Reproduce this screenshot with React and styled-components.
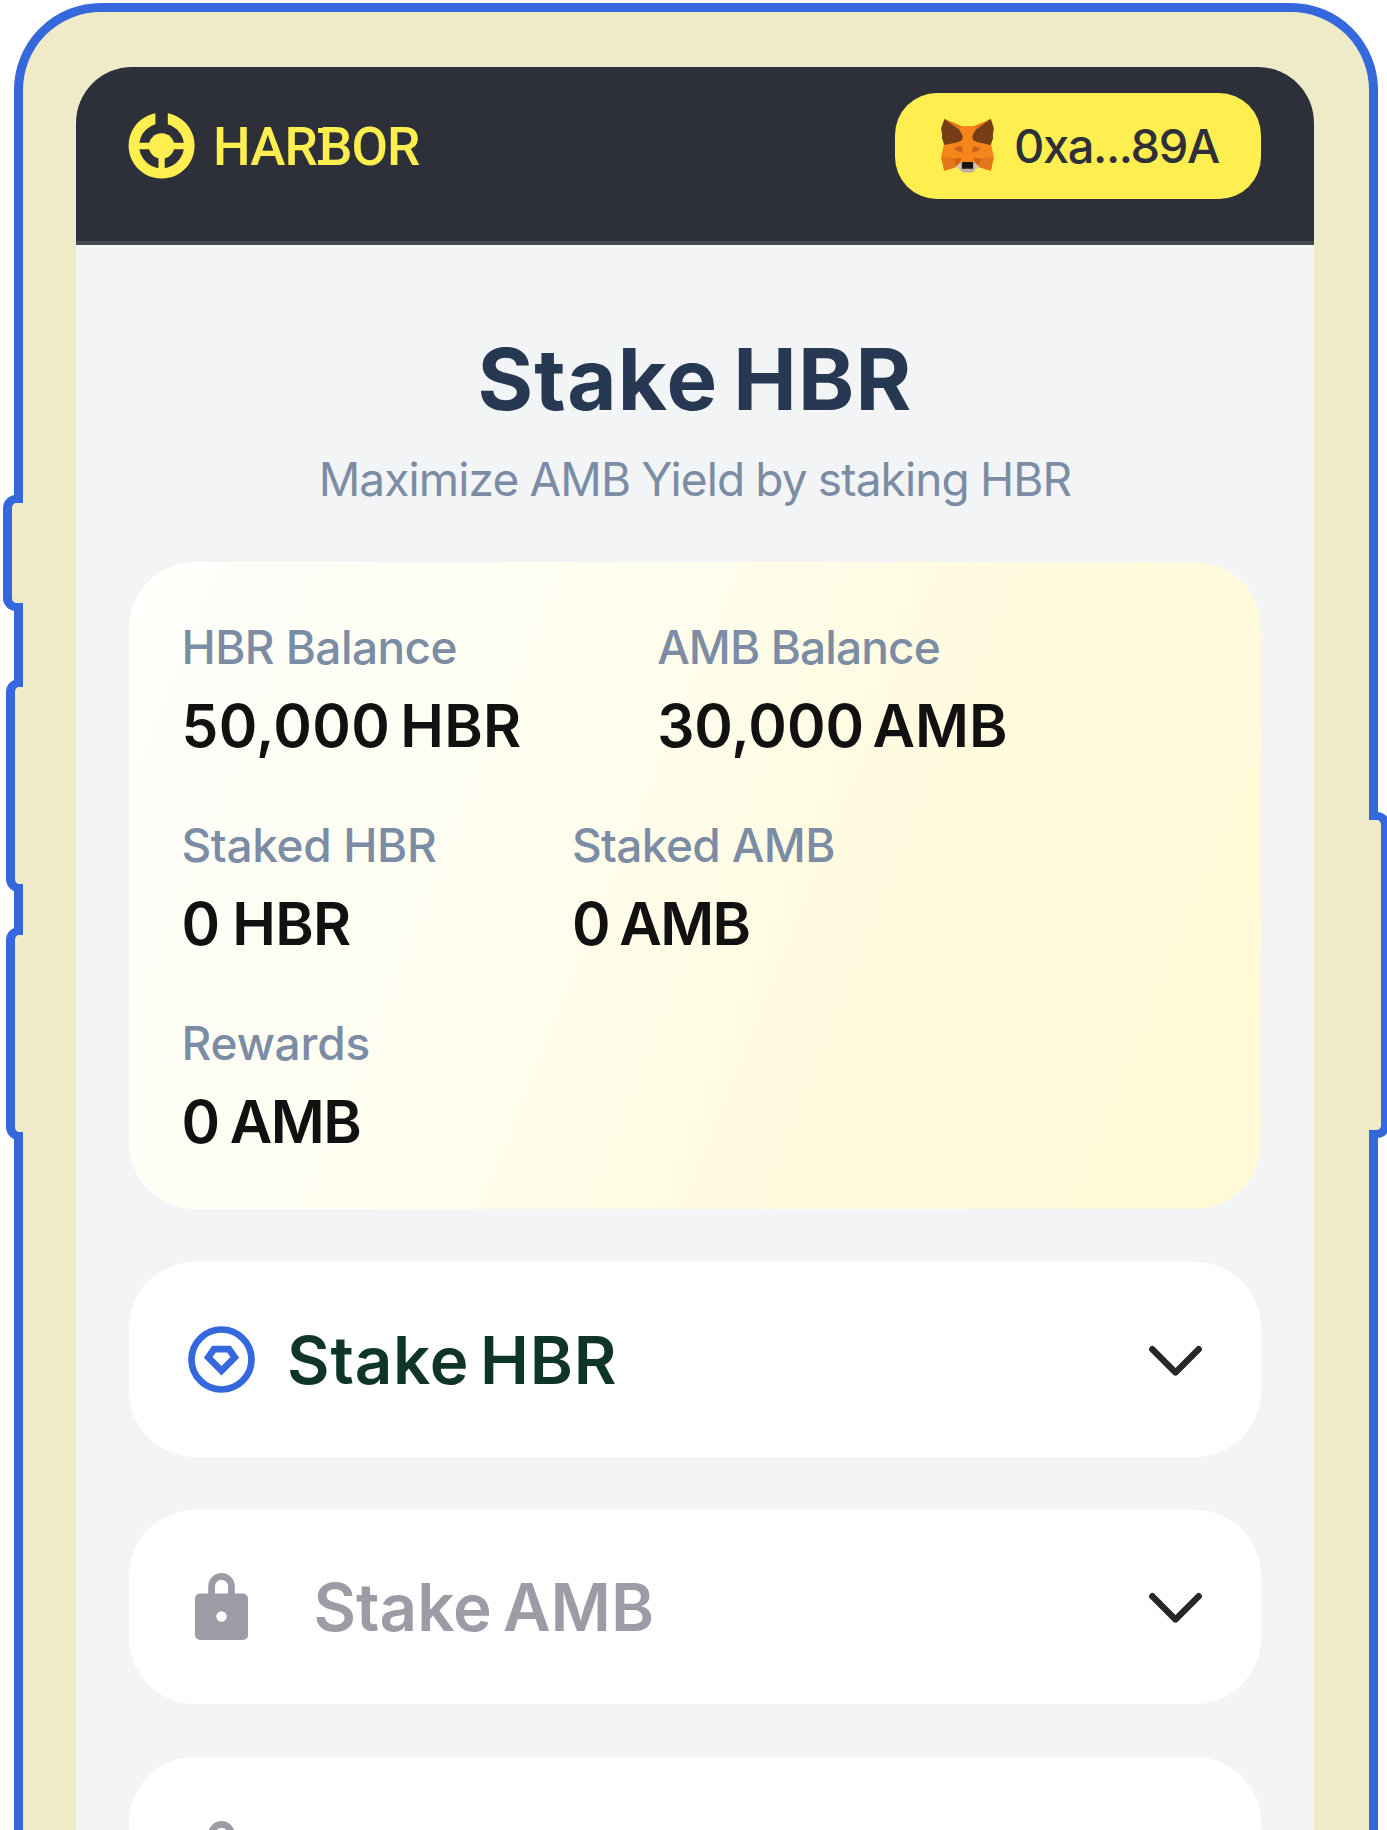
import React from "react";
import styled, { createGlobalStyle } from "styled-components";

const color = {
  outline: "#3568dd",
  shell: "#efebc9",
  screen: "#f2f4f6",
  header: "#2e3039",
  yellow: "#ffee50",
  navy: "#263852",
  muted: "#7b8ca4",
  ink: "#111111",
  green: "#0f3528",
  disabled: "#9c9ca6",
};

const GlobalStyle = createGlobalStyle`
  * { box-sizing: border-box; }
  body { margin: 0; background: #fff; font-family: Inter, "Liberation Sans", sans-serif; }
`;

const Page = styled.main`
  position: relative;
  width: 1387px;
  height: 1830px;
  padding: 3px 0 0 14px;
  overflow: hidden;
`;

const Phone = styled.div`
  width: 1364px;
  height: 1900px;
  padding: 55px 55px 0 53px;
  border: 9px solid ${color.outline};
  border-radius: 87px 87px 0 0;
  background: ${color.shell};
`;

const SideButton = styled.span`
  position: absolute;
  top: ${(p) => p.$top}px;
  left: ${(p) => p.$left}px;
  height: ${(p) => p.$height}px;
  width: ${(p) => p.$width}px;
  background: ${color.shell};
  border: 8.5px solid ${color.outline};
  ${(p) =>
    p.$side === "left"
      ? `border-left-width: 9px; border-right: 0; border-radius: 13px 0 0 13px;`
      : `border-right-width: 9px; border-left: 0; border-radius: 0 13px 13px 0;`}
`;

const Screen = styled.div`
  height: 1800px;
  overflow: hidden;
  border-radius: 56px 56px 0 0;
  background: ${color.screen};
`;

const Header = styled.header`
  display: flex;
  align-items: flex-start;
  justify-content: space-between;
  height: 178px;
  padding: 26px 53px 0;
  background: ${color.header};
  border-bottom: 4px solid #464952;
`;

const Brand = styled.div`
  display: flex;
  align-items: center;
  gap: 18px;
  height: 106px;
`;

const BrandName = styled.span`
  padding-top: 2px;
  color: ${color.yellow};
  font: 500 53px/60px Roboto, sans-serif;
  letter-spacing: -0.9px;
`;

const SlabLetter = styled.span`
  position: relative;
  margin-left: 2px;
  &::before,
  &::after {
    content: "";
    position: absolute;
    left: -0.5px;
    width: 5px;
    height: 5.5px;
    background: ${color.yellow};
  }
  &::before { top: 11.7px; }
  &::after { top: 43.6px; }
`;

const Wallet = styled.button`
  display: flex;
  align-items: center;
  gap: 20px;
  width: 366px;
  height: 106px;
  padding: 0 0 0 46px;
  border: 0;
  border-radius: 42px;
  background: ${color.yellow};
  color: ${color.header};
  font: 500 47px/60px Inter, sans-serif;
  letter-spacing: -1.37px;
`;

const Content = styled.div`
  display: flex;
  flex-direction: column;
  padding: 75px 53px 0;
`;

const Title = styled.h1`
  margin: 0;
  color: ${color.navy};
  text-align: center;
  font-size: 85px;
  font-weight: 700;
  line-height: 120px;
  letter-spacing: 1.25px;
  word-spacing: -6.4px;
`;

const Subtitle = styled.p`
  margin: 9px 0 52px;
  color: ${color.muted};
  text-align: center;
  font-size: 46px;
  line-height: 61px;
  letter-spacing: -0.86px;
  word-spacing: -1px;
`;

const BalanceCard = styled.section`
  display: flex;
  flex-direction: column;
  gap: 42px;
  height: 646.5px;
  padding: 52px 52.5px 0;
  border-radius: 66px;
  background: linear-gradient(112deg, #fffffd 0%, #fffef2 30%, #fffbdf 65%, #fff9d4 100%);
`;

const StatRow = styled.div`
  display: flex;
  gap: 135.5px;
`;

const StatLabel = styled.div`
  color: ${color.muted};
  font-size: 46px;
  font-weight: 500;
  line-height: 66px;
  letter-spacing: ${(p) => p.$track}px;
`;

const StatValue = styled.div`
  margin: 1px 0 -1px;
  color: ${color.ink};
  font-size: 58.5px;
  font-weight: 600;
  line-height: 90px;
  letter-spacing: ${(p) => p.$track}px;
  word-spacing: ${(p) => p.$space}px;
`;

const Panels = styled.div`
  display: flex;
  flex-direction: column;
  gap: 53px;
  margin-top: 53.5px;
`;

const Panel = styled.section`
  display: flex;
  align-items: center;
  height: 194.5px;
  padding: 0 59px;
  border-radius: 66px;
  background: #fff;
`;

const PanelTitle = styled.h2`
  flex: 1;
  margin: 3px 0 0 ${(p) => (p.$locked ? 58.5 : 32)}px;
  color: ${(p) => (p.$locked ? color.disabled : color.green)};
  font-size: 65.5px;
  font-weight: 600;
  line-height: 80px;
  letter-spacing: ${(p) => p.$track}px;
  word-spacing: ${(p) => p.$space}px;
`;

const Icon = styled.svg`
  display: block;
  flex: none;
  overflow: visible;
`;

const Arrow = styled(Icon)`
  margin-top: 3px;
`;

const HarborLogo = () => (
  <Icon width="66" height="68" viewBox="0 0 66 68" fill="none">
    <path d="M26.4 1.2V12.2A22.5 22.5 0 1 0 38.8 12.2V1.2A33 33 0 1 1 26.4 1.2Z" fill={color.yellow} />
    <circle cx="32.6" cy="34" r="12.8" fill={color.yellow} />
    <path d="M7 34H59M32.6 34V60" stroke={color.yellow} strokeWidth="6.3" />
  </Icon>
);

const Fox = () => (
  <Icon width="53" height="54" viewBox="0 0 158 162">
    <path fill="#f6851b" d="M10 0 60 21H100L150 0 158 27 150 77 158 113 149 155 110 143 95 160H65L48 143 9 155 0 113 8 77 0 27Z" />
    <path fill="#e2761b" d="M10 0 60 21 55 37ZM150 0 100 21 105 37ZM0 115 35 117 48 143 9 155ZM158 115 123 117 110 143 149 155Z" />
    <path fill="#763d16" d="M10 0 55 33 65 52 62 64 49 70 10 78 2 57 3 47 0 28ZM148 0 103 33 93 52 96 64 109 70 148 78 156 57 155 47 158 28Z" />
    <path fill="#cd6116" d="M40 86 62 80 66 102 46 95ZM118 86 96 80 92 102 112 95ZM35 119 62 117 48 141ZM123 119 96 117 110 141Z" />
    <path fill="#d7c1b3" d="M44 142 62 129H96L114 142 95 160H65Z" />
    <path fill="#c0ad9e" d="M58 148H100L95 160H65Z" />
    <path fill="#161616" d="M64 129H94L96 133V149H62V133Z" />
  </Icon>
);

const Gem = () => (
  <Icon width="67" height="67" viewBox="0 0 67 67" fill="none" stroke={color.outline}>
    <circle cx="33.5" cy="33.5" r="30" strokeWidth="6.7" />
    <path d="M26 23.2H41L46.8 31.3 33.5 44.8 20.2 31.3Z" strokeWidth="6.7" />
  </Icon>
);

const Lock = () => (
  <Icon width="67" height="67" viewBox="0 0 67 67" fill="none">
    <path d="M23.6 24V13.3A9.9 9.9 0 0 1 43.4 13.3V24" stroke={color.disabled} strokeWidth="6.8" />
    <path
      fill={color.disabled}
      fillRule="evenodd"
      d="M12 20.5H55A5 5 0 0 1 60 25.5V62A5 5 0 0 1 55 67H12A5 5 0 0 1 7 62V25.5A5 5 0 0 1 12 20.5ZM33.5 38.3A5.2 5.2 0 1 0 33.5 48.7 5.2 5.2 0 1 0 33.5 38.3Z"
    />
  </Icon>
);

const Chevron = () => (
  <Arrow width="53" height="32" viewBox="0 0 53 32" fill="none" stroke="#26272b" strokeWidth="6.4" strokeLinecap="round" strokeLinejoin="round">
    <path d="M3.3 4.2 26.5 27.4 49.7 4.2" />
  </Arrow>
);

const balances = [
  [
    { label: "HBR Balance", labelTrack: -0.58, value: "50,000 HBR", valueTrack: 0.35, space: -5 },
    { label: "AMB Balance", labelTrack: -0.88, value: "30,000 AMB", valueTrack: 0, space: -6.3 },
  ],
  [
    { label: "Staked HBR", labelTrack: -0.35, value: "0 HBR", valueTrack: -0.6, space: -1.5 },
    { label: "Staked AMB", labelTrack: -0.6, value: "0 AMB", valueTrack: -1.6, space: -2.8 },
  ],
  [{ label: "Rewards", labelTrack: -0.15, value: "0 AMB", valueTrack: -1.6, space: -1.8 }],
];

const panels = [
  { title: "Stake HBR", track: 0.8, space: -6.4, locked: false },
  { title: "Stake AMB", track: 0, space: -5.3, locked: true },
  { title: "", track: 0, space: 0, locked: true },
];

export default function App() {
  return (
    <Page>
      <GlobalStyle />
      <Phone>
        <Screen>
          <Header>
            <Brand>
              <HarborLogo />
              <BrandName>
                HAR<SlabLetter>B</SlabLetter>OR
              </BrandName>
            </Brand>
            <Wallet>
              <Fox />
              0xa...89A
            </Wallet>
          </Header>
          <Content>
            <Title>Stake HBR</Title>
            <Subtitle>Maximize AMB Yield by staking HBR</Subtitle>
            <BalanceCard>
              {balances.map((row, i) => (
                <StatRow key={i}>
                  {row.map((s) => (
                    <div key={s.label}>
                      <StatLabel $track={s.labelTrack}>{s.label}</StatLabel>
                      <StatValue $track={s.valueTrack} $space={s.space}>
                        {s.value}
                      </StatValue>
                    </div>
                  ))}
                </StatRow>
              ))}
            </BalanceCard>
            <Panels>
              {panels.map((p, i) => (
                <Panel key={i}>
                  {p.locked ? <Lock /> : <Gem />}
                  <PanelTitle $locked={p.locked} $track={p.track} $space={p.space}>
                    {p.title}
                  </PanelTitle>
                  <Chevron />
                </Panel>
              ))}
            </Panels>
          </Content>
        </Screen>
      </Phone>
      <SideButton $side="left" $left={3} $width={20} $top={494.5} $height={116} />
      <SideButton $side="left" $left={5.5} $width={17.5} $top={679} $height={213} />
      <SideButton $side="left" $left={5.5} $width={17.5} $top={927} $height={213} />
      <SideButton $side="right" $left={1369} $width={20.5} $top={811.5} $height={326} />
    </Page>
  );
}
